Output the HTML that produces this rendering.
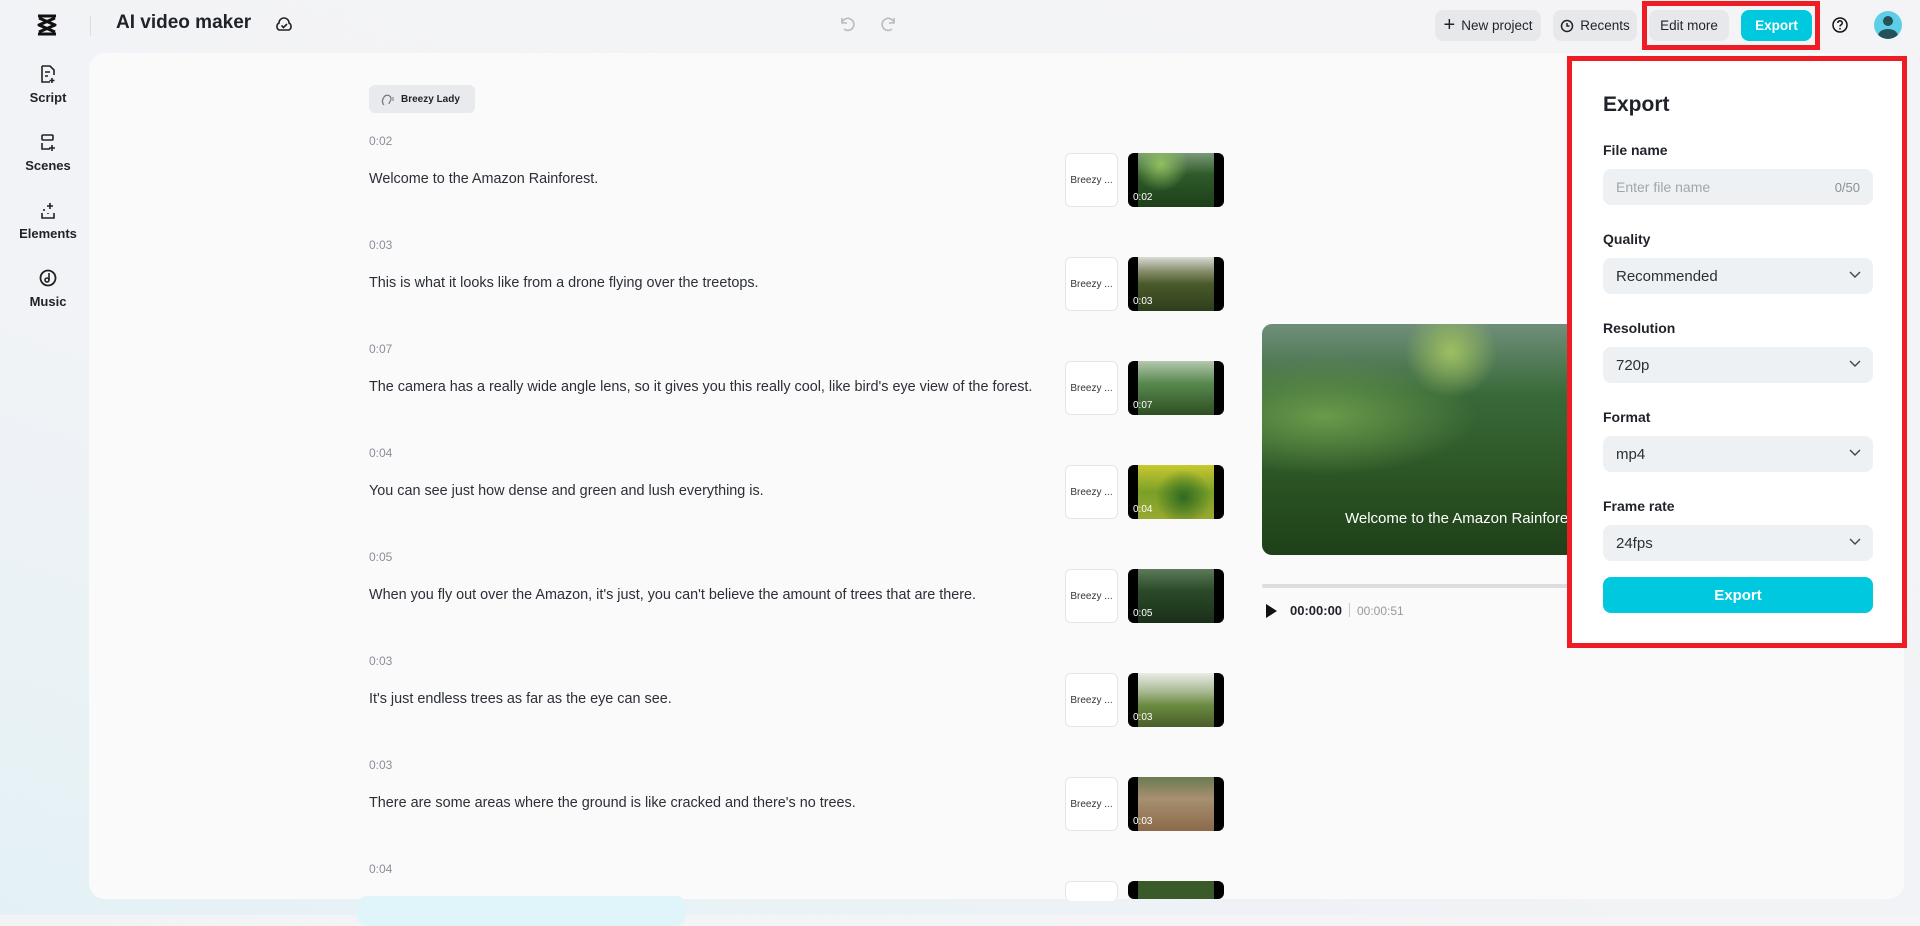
<!DOCTYPE html>
<html><head><meta charset="utf-8"><style>
*{box-sizing:border-box;margin:0;padding:0}
body{width:1920px;height:915px;overflow:hidden;font-family:"Liberation Sans",sans-serif;background:linear-gradient(200deg,#f4f4f7 0%,#f2f3f6 60%,#e3f1f5 100%);position:relative;color:#1f2329}
.abs{position:absolute}
.panel{left:89px;top:53px;width:1815px;height:846px;background:#fafafb;border-radius:16px}
.side{width:96px;text-align:center;font-size:13px;font-weight:bold;color:#1f2329;left:0}
.btn{top:10px;height:31px;border-radius:8px;background:#e6e8ec;font-size:13.5px;display:flex;align-items:center;justify-content:center;gap:6px;color:#1f2329}
.ts{left:369px;font-size:12px;color:#8a8f99}
.tx{left:369px;font-size:14.4px;color:#2b2f36}
.bz{left:1065px;width:53px;height:54px;border:1px solid #e3e5e8;border-radius:6px;background:#fff;font-size:10px;display:flex;align-items:center;justify-content:center;color:#333}
.th{left:1128px;width:96px;height:54px;border-radius:6px;background:#000;overflow:hidden}
.th i{position:absolute;left:10px;right:10px;top:0;bottom:0}
.th b{position:absolute;left:5px;bottom:4px;color:#fff;font-size:10px;font-weight:normal}
.lab{left:1603px;font-size:14px;font-weight:bold;color:#1f2329}
.sel{left:1603px;width:270px;height:36px;background:#eef1f4;border-radius:8px;font-size:15px;padding-left:13px;display:flex;align-items:center;color:#2b2f36}
.sel svg{position:absolute;right:12px;top:13px}
</style></head><body>
<div class="abs panel"></div>
<!-- logo -->
<svg class="abs" style="left:35px;top:13px" width="24" height="24" viewBox="0 0 24 24"><path d="M3 3h18M3 21h18M4 5l16 7-16 7M20 5L4 12l16 7" fill="none" stroke="#111" stroke-width="3" stroke-linejoin="round"/></svg>
<div class="abs" style="left:90px;top:16px;width:1px;height:20px;background:#ddd"></div>
<div class="abs" style="left:116px;top:12px;font-size:19px;font-weight:bold">AI video maker</div>
<svg class="abs" style="left:274px;top:14px" width="20" height="20" viewBox="0 0 20 20"><path d="M5 16h10a4 4 0 0 0 0-7 5 5 0 0 0-10 0 4 4 0 0 0 0 7z" fill="none" stroke="#222" stroke-width="1.6"/><path d="M7.5 11.5l2 2 3.5-3.5" fill="none" stroke="#222" stroke-width="1.6"/></svg>
<svg class="abs" style="left:838px;top:14px" width="60" height="20" viewBox="0 0 60 20"><path d="M4 4v5h5M4 9a6 6 0 1 1 2 6" fill="none" stroke="#bbb" stroke-width="1.6"/><path d="M56 4v5h-5M56 9a6 6 0 1 0-2 6" fill="none" stroke="#bbb" stroke-width="1.6"/></svg>
<!-- sidebar -->
<svg class="abs" style="left:39px;top:64px" width="18" height="20" viewBox="0 0 18 20"><path d="M3 2h8l4 4v5M3 2v16h8M6 8h5M6 12h3M13 14v5M10.5 16.5h5" fill="none" stroke="#222" stroke-width="1.6"/></svg>
<div class="abs side" style="top:90px">Script</div>
<svg class="abs" style="left:39px;top:133px" width="18" height="20" viewBox="0 0 18 20"><rect x="3" y="2" width="11" height="5" rx="1" fill="none" stroke="#222" stroke-width="1.6"/><path d="M3 10v6h8M13 12v6M10 15h6" fill="none" stroke="#222" stroke-width="1.6"/></svg>
<div class="abs side" style="top:158px">Scenes</div>
<svg class="abs" style="left:39px;top:201px" width="18" height="20" viewBox="0 0 18 20"><path d="M3 12v5h12v-5M11 2v6M8 5h6M5 8v2M9 12v1" fill="none" stroke="#222" stroke-width="1.6"/></svg>
<div class="abs side" style="top:226px">Elements</div>
<svg class="abs" style="left:38px;top:268px" width="20" height="20" viewBox="0 0 20 20"><circle cx="10" cy="10" r="7.5" fill="none" stroke="#222" stroke-width="1.8"/><circle cx="9" cy="12" r="2" fill="none" stroke="#222" stroke-width="1.6"/><path d="M11 12V5" stroke="#222" stroke-width="1.6"/></svg>
<div class="abs side" style="top:294px">Music</div>
<!-- top right -->
<div class="abs btn" style="left:1435px;width:106px"><span style="font-size:20px;font-weight:300">+</span>New project</div>
<div class="abs btn" style="left:1553px;width:84px"><svg width="14" height="14" viewBox="0 0 14 14"><circle cx="7" cy="7" r="5.5" fill="none" stroke="#222" stroke-width="1.5"/><path d="M7 4v3h2.5" fill="none" stroke="#222" stroke-width="1.5"/></svg>Recents</div>
<div class="abs btn" style="left:1649px;width:80px">Edit more</div>
<div class="abs btn" style="left:1741px;width:71px;background:#00c8de;color:#fff;font-weight:bold">Export</div>
<div class="abs" style="left:1642px;top:1px;width:178px;height:49px;border:5px solid #ee1c25"></div>
<svg class="abs" style="left:1831px;top:16px" width="18" height="18" viewBox="0 0 18 18"><circle cx="9" cy="9" r="7" fill="none" stroke="#111" stroke-width="1.5"/><path d="M6.8 7a2.2 2.2 0 1 1 3 2c-.6.3-.8.7-.8 1.5" fill="none" stroke="#111" stroke-width="1.5"/><circle cx="9" cy="12.8" r=".9" fill="#111"/></svg>
<svg class="abs" style="left:1874px;top:11px" width="28" height="28" viewBox="0 0 28 28"><clipPath id="c"><circle cx="14" cy="14" r="14"/></clipPath><g clip-path="url(#c)"><rect width="28" height="28" fill="#5ccfe6"/><circle cx="14" cy="10" r="5" fill="#24515a"/><ellipse cx="14" cy="25" rx="10" ry="7" fill="#24515a"/></g></svg>
<!-- chip -->
<div class="abs" style="left:369px;top:85px;width:106px;height:28px;background:#e8eaee;border-radius:6px;font-size:10px;font-weight:bold;display:flex;align-items:center;padding-left:32px">Breezy Lady</div>
<svg class="abs" style="left:380px;top:91px" width="16" height="16" viewBox="0 0 16 16"><path d="M4 14c-2-2-2-5 0-8 2-3 7-2 7 2 0 2-2 3-2 5" fill="none" stroke="#777" stroke-width="1.2"/><path d="M13 6v4" stroke="#777"/></svg>
<!-- rows -->
<div class="abs ts" style="top:134px">0:02</div><div class="abs tx" style="top:171px">Welcome to the Amazon Rainforest.</div>
<div class="abs ts" style="top:238px">0:03</div><div class="abs tx" style="top:275px">This is what it looks like from a drone flying over the treetops.</div>
<div class="abs ts" style="top:342px">0:07</div><div class="abs tx" style="top:379px">The camera has a really wide angle lens, so it gives you this really cool, like bird's eye view of the forest.</div>
<div class="abs ts" style="top:446px">0:04</div><div class="abs tx" style="top:483px">You can see just how dense and green and lush everything is.</div>
<div class="abs ts" style="top:550px">0:05</div><div class="abs tx" style="top:587px">When you fly out over the Amazon, it's just, you can't believe the amount of trees that are there.</div>
<div class="abs ts" style="top:654px">0:03</div><div class="abs tx" style="top:691px">It's just endless trees as far as the eye can see.</div>
<div class="abs ts" style="top:758px">0:03</div><div class="abs tx" style="top:795px">There are some areas where the ground is like cracked and there's no trees.</div>
<div class="abs ts" style="top:862px">0:04</div>
<div class="abs bz" style="top:153px">Breezy ...</div><div class="abs th" style="top:153px"><i style="background:radial-gradient(circle at 30% 20%,#8fbf60,transparent 40%),linear-gradient(#7a9a78,#2f5a2a 40%,#1e3f1a)"></i><b>0:02</b></div>
<div class="abs bz" style="top:257px">Breezy ...</div><div class="abs th" style="top:257px"><i style="background:linear-gradient(#d9dcd5,#8a9070 25%,#4a5a2a 50%,#2e3e1c)"></i><b>0:03</b></div>
<div class="abs bz" style="top:361px">Breezy ...</div><div class="abs th" style="top:361px"><i style="background:linear-gradient(#b5c7b0,#5a8a50 40%,#2e4e22)"></i><b>0:07</b></div>
<div class="abs bz" style="top:465px">Breezy ...</div><div class="abs th" style="top:465px"><i style="background:radial-gradient(circle at 60% 60%,#2f6a20,transparent 50%),linear-gradient(#c8c830,#7aa028 50%,#9aa830)"></i><b>0:04</b></div>
<div class="abs bz" style="top:569px">Breezy ...</div><div class="abs th" style="top:569px"><i style="background:linear-gradient(#5a7a5a,#2a4a2a 40%,#1a3018)"></i><b>0:05</b></div>
<div class="abs bz" style="top:673px">Breezy ...</div><div class="abs th" style="top:673px"><i style="background:linear-gradient(#e8ece6,#a8b890 35%,#6a8a40 60%,#4a5e2a)"></i><b>0:03</b></div>
<div class="abs bz" style="top:777px">Breezy ...</div><div class="abs th" style="top:777px"><i style="background:linear-gradient(#6a7a50,#a89070 40%,#8a6a4a)"></i><b>0:03</b></div>
<div class="abs bz" style="top:881px;height:20px;border-bottom:none"></div><div class="abs th" style="top:881px;height:18px"><i style="background:#3a5a2a"></i></div>
<!-- preview -->
<div class="abs" style="left:1262px;top:324px;width:420px;height:231px;border-radius:10px;overflow:hidden;background:radial-gradient(ellipse at 15% 40%,#6a9a4a 0,transparent 30%),radial-gradient(circle at 45% 12%,#9ec060 0,transparent 15%),linear-gradient(#6f8f7a 0%,#3a6a3a 30%,#2a5222 70%,#1f401a 100%)"></div>
<div class="abs" style="left:1345px;top:510px;color:#fff;font-size:15px">Welcome to the Amazon Rainforest.</div>
<div class="abs" style="left:1262px;top:584px;width:420px;height:4px;background:#dcdde0;border-radius:2px"></div>
<svg class="abs" style="left:1264px;top:603px" width="14" height="16"><path d="M2 1l11 7-11 7z" fill="#111"/></svg>
<div class="abs" style="left:1290px;top:603px;font-size:13px;font-weight:bold">00:00:00</div>
<div class="abs" style="left:1349px;top:603px;width:1px;height:14px;background:#ccc"></div>
<div class="abs" style="left:1357px;top:604px;font-size:12px;color:#999">00:00:51</div>
<div class="abs" style="left:357px;top:896px;width:329px;height:30px;background:#dff5f9;border-radius:10px"></div>
<!-- export panel -->
<div class="abs" style="left:1567px;top:56px;width:340px;height:592px;background:#fff;border:5px solid #ee1c25"></div>
<div class="abs" style="left:1603px;top:93px;font-size:21px;font-weight:bold">Export</div>
<div class="abs lab" style="top:142px">File name</div>
<div class="abs sel" style="top:169px;color:#a0a6ae;font-size:14px">Enter file name<span style="position:absolute;right:13px;color:#8a9099;font-size:13px">0/50</span></div>
<div class="abs lab" style="top:231px">Quality</div>
<div class="abs sel" style="top:258px">Recommended<svg width="12" height="8"><path d="M1 1l5 5 5-5" fill="none" stroke="#444" stroke-width="1.4"/></svg></div>
<div class="abs lab" style="top:320px">Resolution</div>
<div class="abs sel" style="top:347px">720p<svg width="12" height="8"><path d="M1 1l5 5 5-5" fill="none" stroke="#444" stroke-width="1.4"/></svg></div>
<div class="abs lab" style="top:409px">Format</div>
<div class="abs sel" style="top:436px">mp4<svg width="12" height="8"><path d="M1 1l5 5 5-5" fill="none" stroke="#444" stroke-width="1.4"/></svg></div>
<div class="abs lab" style="top:498px">Frame rate</div>
<div class="abs sel" style="top:525px">24fps<svg width="12" height="8"><path d="M1 1l5 5 5-5" fill="none" stroke="#444" stroke-width="1.4"/></svg></div>
<div class="abs" style="left:1603px;top:577px;width:270px;height:36px;background:#00c8de;border-radius:8px;color:#fff;font-weight:bold;font-size:15px;display:flex;align-items:center;justify-content:center">Export</div>
</body></html>
